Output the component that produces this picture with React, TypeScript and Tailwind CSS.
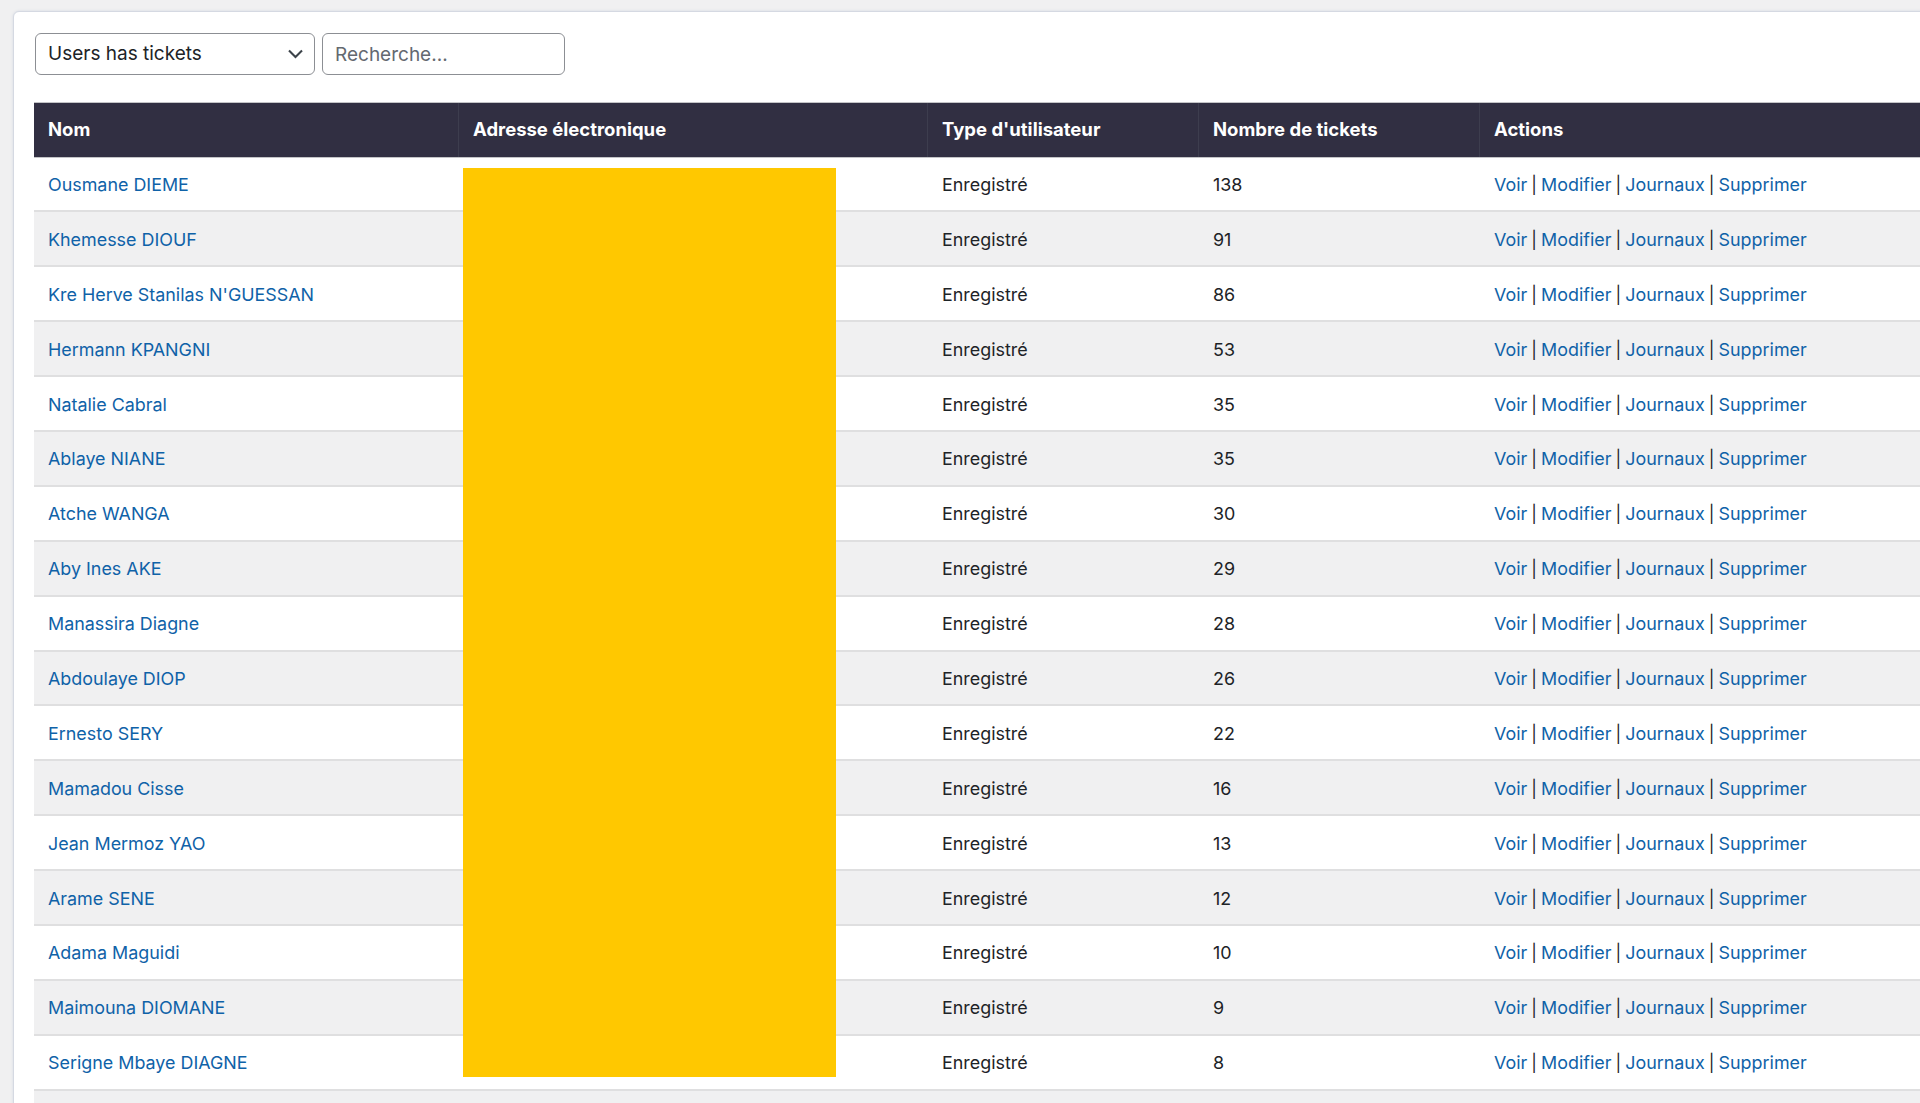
const users = [
  ["Ousmane DIEME", "138"],
  ["Khemesse DIOUF", "91"],
  ["Kre Herve Stanilas N'GUESSAN", "86"],
  ["Hermann KPANGNI", "53"],
  ["Natalie Cabral", "35"],
  ["Ablaye NIANE", "35"],
  ["Atche WANGA", "30"],
  ["Aby Ines AKE", "29"],
  ["Manassira Diagne", "28"],
  ["Abdoulaye DIOP", "26"],
  ["Ernesto SERY", "22"],
  ["Mamadou Cisse", "16"],
  ["Jean Mermoz YAO", "13"],
  ["Arame SENE", "12"],
  ["Adama Maguidi", "10"],
  ["Maimouna DIOMANE", "9"],
  ["Serigne Mbaye DIAGNE", "8"],
];

const actions = ["Voir", "Modifier", "Journaux", "Supprimer"];
const cols = "grid grid-cols-[425px_469px_271px_281px_1fr]";

const App = () => {
  return (
    <div className="h-[1103px] w-[1920px] overflow-hidden bg-[#f0f0f1] pl-[13px] pt-[11px] font-['Inter',sans-serif] text-[17.9px] text-[#1d2327]">
      <div className="relative w-[1960px] rounded-tl-md border border-[#d5d9e2] bg-white pl-[20px] pt-[21px] shadow-[0_0_3px_#d5d9e2]">
        <div className="ml-px flex gap-[7px]">
          <div className="flex h-[42px] w-[280px] items-center justify-between rounded-md border border-[#8c8f94] bg-white pl-3 pr-[11px] text-[19px]">
            <span>Users has tickets</span>
            <svg width="15" height="10" viewBox="0 0 15 10" fill="none" className="text-[#3c434a]">
              <path d="M1 1.5 L7.5 8 L14 1.5" stroke="currentColor" strokeWidth="2.1" />
            </svg>
          </div>
          <input
            placeholder="Recherche..."
            className="h-[42px] w-[243px] rounded-md border border-[#8c8f94] bg-white px-3 text-[19px] outline-none placeholder:text-[#646970]"
          />
        </div>

        <div className="mt-[27px] w-[1886px]">
          <div className={`${cols} h-[55.5px] items-center border-y border-[#c3c4c7] bg-[#312f42] text-[18.5px] font-bold text-white`}>
            {["Nom", "Adresse électronique", "Type d'utilisateur", "Nombre de tickets", "Actions"].map((h) => (
              <div key={h} className="flex h-full items-center border-r border-[#3d3d4e] px-[14px] pt-px last:border-r-0">
                {h}
              </div>
            ))}
          </div>

          {users.map(([name, count], i) => (
            <div
              key={name}
              className={`${cols} h-[54.9px] items-center border-b-2 border-[#dfdfe0] pt-[3px] ${i % 2 === 1 ? "bg-[#f0f0f1]" : "bg-white"}`}
            >
              <a className="px-[14px] text-[#0f62a8]">{name}</a>
              <div />
              <div className="px-[14px]">Enregistré</div>
              <div className="px-[14px]">{count}</div>
              <div className="px-[14px]">
                {actions.map((a, j) => (
                  <span key={a}>
                    {j > 0 && <span className="-mx-[0.7px] text-[17px]"> | </span>}
                    <a className="text-[#0f62a8]">{a}</a>
                  </span>
                ))}
              </div>
            </div>
          ))}
          <div className="h-[40px] bg-[#f0f0f1]" />
        </div>

        {/* masked email column */}
        <div className="absolute left-[449px] top-[156px] h-[909px] w-[373px] bg-[#ffc800]" />
      </div>
    </div>
  );
};

export default App;
